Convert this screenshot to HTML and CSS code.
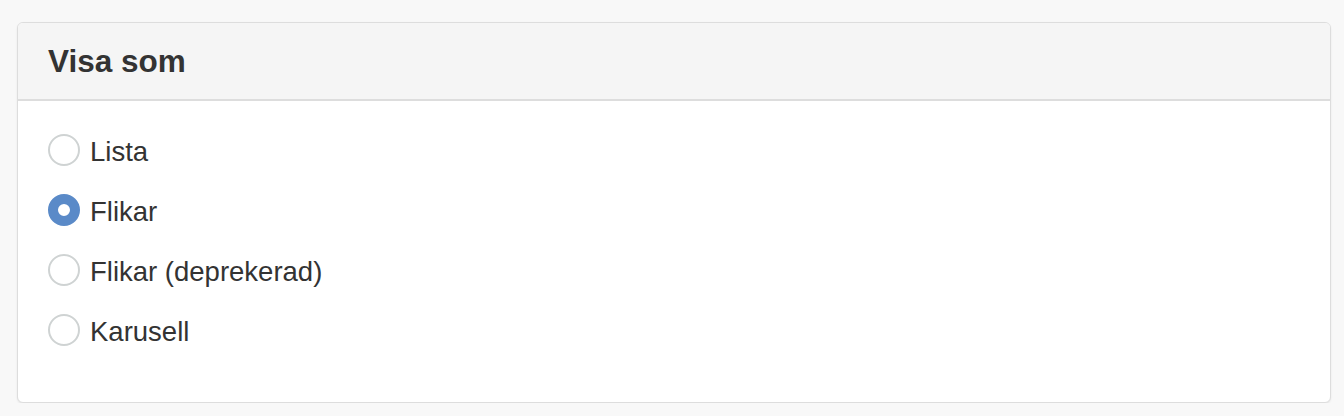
FILE: index.html
```html
<!DOCTYPE html>
<html>
<head>
   <title>Visa som</title>
   <link rel="stylesheet" href="styles.css">
</head>
<body>
   <div class="container">
       <div class="panel">
           <div class="panel-heading">
               <h3 class="panel-title">Visa som</h3>
           </div>
           <div class="panel-body">
               <label class="radio-row">
                   <input type="radio" name="display" value="list">
                   <span class="radio-mark"></span>
                   <span class="radio-label">Lista</span>
               </label>
               <label class="radio-row">
                   <input type="radio" name="display" value="tabs" checked>
                   <span class="radio-mark"></span>
                   <span class="radio-label">Flikar</span>
               </label>
               <label class="radio-row">
                   <input type="radio" name="display" value="tabs-old">
                   <span class="radio-mark"></span>
                   <span class="radio-label">Flikar (deprekerad)</span>
               </label>
               <label class="radio-row">
                   <input type="radio" name="display" value="carousel">
                   <span class="radio-mark"></span>
                   <span class="radio-label">Karusell</span>
               </label>
           </div>
       </div>
   </div>
</body>
</html>
```

FILE: styles.css
```css
* {
    margin: 0;
    padding: 0;
    box-sizing: border-box;
}

body {
    font-family: "Liberation Sans", Arial, Helvetica, sans-serif;
    background: #F8F8F8;
    color: #333333;
}

.container {
    padding: 22px 13px 0 17px;
}

.panel {
    background: #FFFFFF;
    border: 1px solid #DDDDDD;
    border-radius: 6px;
    box-shadow: 0 1px 2px rgba(0, 0, 0, 0.08);
    overflow: hidden;
}

.panel-heading {
    display: flex;
    align-items: center;
    height: 78px;
    padding: 0 30px;
    background: #F5F5F5;
    border-bottom: 2px solid #DDDDDD;
}

.panel-title {
    font-size: 31.5px;
    font-weight: 700;
    color: #333333;
}

.panel-body {
    display: flex;
    flex-direction: column;
    padding: 19px 30px 42px;
}

.radio-row {
    display: flex;
    align-items: center;
    gap: 10px;
    height: 60px;
    cursor: pointer;
}

.radio-row input {
    display: none;
}

.radio-mark {
    width: 32px;
    height: 32px;
    border: 2px solid #CFD3D3;
    border-radius: 50%;
    background: #FFFFFF;
    flex-shrink: 0;
}

.radio-row input:checked + .radio-mark {
    border: 10px solid #5A8AC8;
}

.radio-label {
    font-size: 27.5px;
    color: #333333;
    padding-top: 4px;
}
```
